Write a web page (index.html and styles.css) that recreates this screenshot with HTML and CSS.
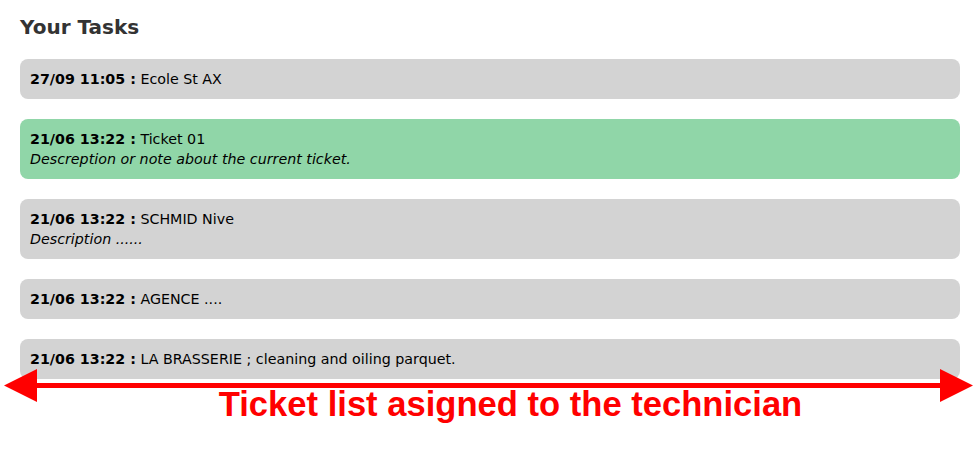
FILE: index.html
```html
<!DOCTYPE html>
<html>

<head>
    <title>Your Tasks</title>
    <link rel="stylesheet" href="styles.css">
</head>

<body>
    <div class="content">
        <h2>Your Tasks</h2>

        <div class="task">
            <strong>27/09 11:05 :</strong> Ecole St AX
        </div>

        <div class="task current">
            <strong>21/06 13:22 :</strong> Ticket 01
            <em>Descreption or note about the current ticket.</em>
        </div>

        <div class="task">
            <strong>21/06 13:22 :</strong> SCHMID Nive
            <em>Description ......</em>
        </div>

        <div class="task">
            <strong>21/06 13:22 :</strong> AGENCE ....
        </div>

        <div class="task">
            <strong>21/06 13:22 :</strong> LA BRASSERIE ; cleaning and oiling parquet.
        </div>
    </div>

    <!-- annotation drawn over the list -->
    <svg class="arrow" width="979" height="40" viewBox="0 0 979 40">
        <rect x="30" y="15" width="918" height="5" fill="#ff0000" />
        <polygon points="4,17.5 37,1 37,34" fill="#ff0000" />
        <polygon points="973,17.5 940,1 940,34" fill="#ff0000" />
    </svg>
    <div class="note">Ticket list asigned to the technician</div>
</body>

</html>
```

FILE: styles.css
```css
body {
    margin: 0;
    background: #fff;
    font-family: "DejaVu Sans", sans-serif;
    font-size: 14.25px;
    color: #000;
}

.content {
    padding: 15px 19px 0 20px;
}

h2 {
    margin: 0 0 20px 0;
    font-size: 20px;
    color: #333;
}

.task {
    background-color: #d3d3d3;
    border-radius: 8px;
    padding: 10px;
    line-height: 20px;
    margin-bottom: 20px;
}

.task em {
    display: block;
}

.current {
    background-color: #90d6a8;
}

.arrow {
    position: absolute;
    left: 0;
    top: 368px;
}

.note {
    position: absolute;
    left: 0;
    width: 1021px;
    top: 385px;
    text-align: center;
    font-family: "Liberation Sans", Arial, sans-serif;
    font-weight: bold;
    font-size: 34.6px;
    color: #ff0000;
}
```
